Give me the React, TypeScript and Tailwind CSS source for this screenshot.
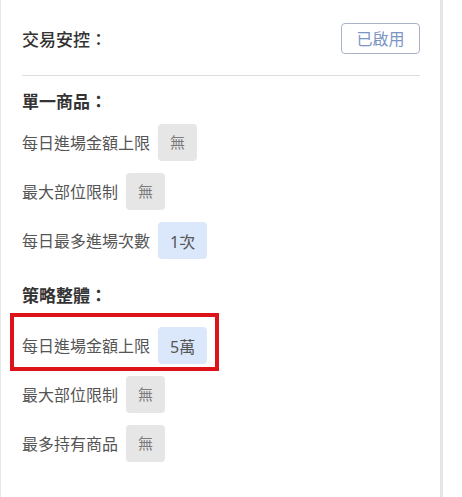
import React from 'react';

type Row = { label: string; value: string; active?: boolean; marked?: boolean };

const single: Row[] = [
  { label: '每日進場金額上限', value: '無' },
  { label: '最大部位限制', value: '無' },
  { label: '每日最多進場次數', value: '1次', active: true },
];

const strategy: Row[] = [
  { label: '每日進場金額上限', value: '5萬', active: true, marked: true },
  { label: '最大部位限制', value: '無' },
  { label: '最多持有商品', value: '無' },
];

function LimitRow({ label, value, active, marked }: Row) {
  return (
    <div className="relative flex items-center h-[37px] gap-2">
      {marked && (
        <div className="absolute left-[-12px] top-[-14px] w-[209px] h-[58px] border-4 border-[#dc1419] pointer-events-none"></div>
      )}
      <span className="text-[16px] text-[#555] leading-none">{label}</span>
      <span
        className={
          active
            ? 'h-[37px] px-3 rounded flex items-center text-[16px] text-[#555] bg-[#dbe7fb] pt-[3px]'
            : 'h-[37px] px-3 rounded flex items-center text-[15px] text-[#7a7a7a] bg-[#e6e6e6]'
        }
      >
        {value}
      </span>
    </div>
  );
}

export default function App() {
  return (
    <div
      className="flex w-[462px] h-[497px] bg-white"
      style={{ fontFamily: '"Noto Sans", "Noto Sans CJK TC", sans-serif' }}
    >
      <div className="w-[440px] h-full border-l border-[#e6e6e6] pl-[21px] pr-[20px] pt-[23px]">
        <div className="flex items-center justify-between h-[31px]">
          <h2 className="text-[17px] font-medium text-[#333] mt-[3px]">交易安控：</h2>
          <button className="h-[31px] w-[79px] rounded border border-[#a8b3c7] text-[16px] text-[#7d95c3] flex items-center justify-center">
            已啟用
          </button>
        </div>
        <div className="h-px bg-[#dddddd] mt-[21px]"></div>

        <h3 className="text-[17px] font-bold text-[#333] leading-6 mt-[14px]">單一商品：</h3>
        <div className="flex flex-col gap-3 mt-[10px]">
          {single.map((r) => (
            <LimitRow key={r.label} {...r} />
          ))}
        </div>

        <h3 className="text-[17px] font-bold text-[#333] leading-6 mt-[25px]">策略整體：</h3>
        <div className="flex flex-col gap-3 mt-[19px]">
          {strategy.map((r) => (
            <LimitRow key={r.label} {...r} />
          ))}
        </div>
      </div>
      <div className="w-[3px] h-full bg-[#e5e5e5]"></div>
    </div>
  );
}
